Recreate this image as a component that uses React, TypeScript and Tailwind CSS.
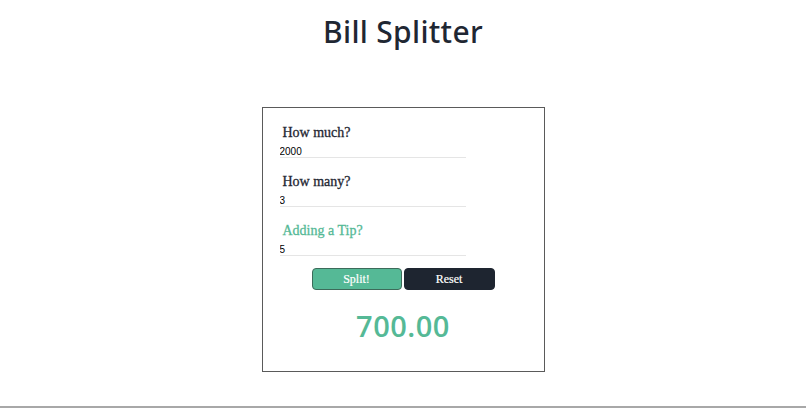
import { useState } from "react";

const FIELDS = [
  { key: "amount", label: "How much?", accent: false },
  { key: "people", label: "How many?", accent: false },
  { key: "tip", label: "Adding a Tip?", accent: true },
] as const;

export default function App() {
  const [values, setValues] = useState<Record<string, string>>({ amount: "2000", people: "3", tip: "5" });
  const [result, setResult] = useState("700.00");

  const split = () => {
    const a = parseFloat(values.amount) || 0;
    const p = parseFloat(values.people) || 1;
    const t = parseFloat(values.tip) || 0;
    setResult(((a * (1 + t / 100)) / p).toFixed(2));
  };

  return (
    <div className="w-full bg-white">
      <div className="h-[406px] flex flex-col items-center">
        <h1 className="pt-[14px] text-[30px] leading-[36px] font-medium text-[#1f2733] font-['Noto_Sans',sans-serif] tracking-[0.3px]">
          Bill Splitter
        </h1>
        <div className="mt-[57px] w-[283px] h-[265px] border border-[#5a5a5a] pt-[15px] pl-[17px]">
          {FIELDS.map((f) => (
            <div key={f.key} className="mb-[14px]">
              <label
                className={`block ml-[3px] text-[14px] leading-[20px] [-webkit-text-stroke:0.3px] font-['Liberation_Serif',serif] ${
                  f.accent ? "text-[#55b996]" : "text-[#1f2733]"
                }`}
              >
                {f.label}
              </label>
              <input
                value={values[f.key]}
                onChange={(e) => setValues({ ...values, [f.key]: e.target.value })}
                className="mt-[3px] block w-[186px] h-[12px] border-b border-[#e5e5e5] text-[10px] leading-[11px] text-black font-['Liberation_Sans',sans-serif] outline-none"
              />
            </div>
          ))}
          <div className="-ml-[17px] mt-[-2px] flex justify-center gap-[2px]">
            <button
              onClick={split}
              className="w-[90px] h-[22px] rounded-[4px] bg-[#55b996] border border-[#3d6b5a] text-white text-[12px] [-webkit-text-stroke:0.2px] font-['Liberation_Serif',serif]"
            >
              Split!
            </button>
            <button
              onClick={() => {
                setValues({ amount: "", people: "", tip: "" });
                setResult("0.00");
              }}
              className="w-[91px] h-[22px] rounded-[4px] bg-[#1e2530] border border-[#1e2530] text-white text-[12px] [-webkit-text-stroke:0.2px] font-['Liberation_Serif',serif]"
            >
              Reset
            </button>
          </div>
          <p className="-ml-[17px] mt-[18px] text-center text-[29px] leading-[36px] font-semibold tracking-[0.5px] text-[#55b996] font-['Open_Sans',sans-serif]">
            {result}
          </p>
        </div>
      </div>
      <div className="h-[2px] bg-[#a8a8a8]" />
    </div>
  );
}
